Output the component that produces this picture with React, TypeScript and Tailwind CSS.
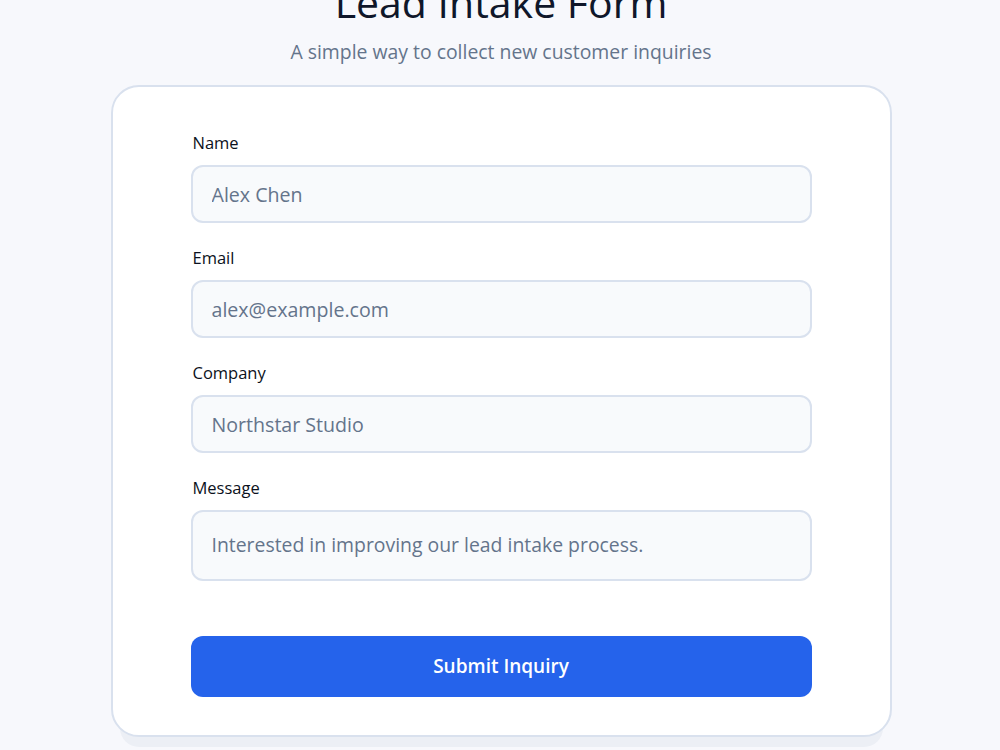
import React from 'react';

const fields = [
  { label: 'Name', value: 'Alex Chen', type: 'text' },
  { label: 'Email', value: 'alex@example.com', type: 'email' },
  { label: 'Company', value: 'Northstar Studio', type: 'text' },
];

const App: React.FC = () => {
  return (
    <div className="min-h-screen overflow-hidden bg-[#f7f8fc] font-['Open_Sans',sans-serif]">
      <div className="mx-auto -mt-[22px] flex w-[781px] translate-x-[1px] flex-col items-center">
        {/* Header */}
        <h1 className="text-[41px] leading-[48px] font-medium text-[#0f172a]">Lead Intake Form</h1>
        <p className="mt-[12px] text-[19.4px] leading-[28px] text-[#64748b]">
          A simple way to collect new customer inquiries
        </p>

        {/* Card */}
        <form className="mt-[19px] w-full rounded-[28px] border-2 border-[#d9e1ee] bg-white px-[78px] pt-[44px] pb-[38px] shadow-[0_19px_0_-9px_#eceff5]">
          <div className="flex flex-col gap-[23px]">
            {fields.map((f) => (
              <label key={f.label} className="flex flex-col gap-[10px]">
                <span className="pl-[2px] text-[16.5px] leading-[24px] text-[#0b1120]">{f.label}</span>
                <input
                  type={f.type}
                  defaultValue={f.value}
                  className="h-[58px] rounded-[12px] border-2 border-[#d9e1ee] bg-[#f8fafc] px-[19px] text-[19.6px] text-[#64748b] outline-none"
                />
              </label>
            ))}
            <label className="flex flex-col gap-[10px]">
              <span className="pl-[2px] text-[16.5px] leading-[24px] text-[#0b1120]">Message</span>
              <textarea
                rows={1}
                defaultValue="Interested in improving our lead intake process."
                className="h-[71px] resize-none rounded-[12px] border-2 border-[#d9e1ee] bg-[#f8fafc] px-[19px] py-[19px] text-[19.4px] leading-[28px] text-[#64748b] outline-none"
              />
            </label>
          </div>

          <button
            type="button"
            className="mt-[55px] h-[61px] w-full rounded-[12px] bg-[#2563eb] text-[19px] font-semibold text-white"
          >
            Submit Inquiry
          </button>
        </form>
      </div>
    </div>
  );
};

export default App;
